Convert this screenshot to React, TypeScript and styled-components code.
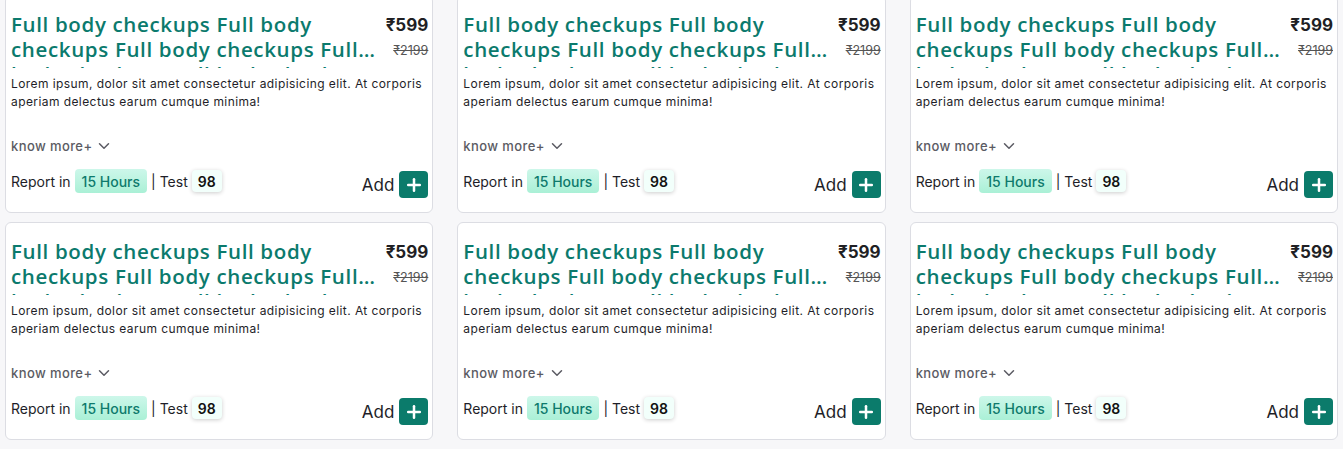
import React from "react";
import styled, { createGlobalStyle } from "styled-components";
import { ChevronDown, Plus } from "lucide-react";

const Global = createGlobalStyle`
  html, body { margin: 0; padding: 0; background: #ffffff; }
  body { font-family: "Inter", "Noto Sans", sans-serif; overflow: hidden; }
`;

const Grid = styled.div`
  display: grid;
  grid-template-columns: repeat(3, minmax(0, 1fr));
  column-gap: 24px;
  row-gap: 9px;
  padding: 0 5px 9px 5px;
  margin-top: -5px;
  background: #f7f7f9;
`;

const Card = styled.div`
  box-sizing: border-box;
  height: 218px;
  background: #fff;
  border: 1px solid #dcdde3;
  border-radius: 6px;
  padding: 16px 4px 14px 5px;
  display: flex;
  flex-direction: column;
`;

const Head = styled.div`
  display: flex;
  justify-content: space-between;
  gap: 3px;
`;

const Title = styled.h3`
  margin: 0;
  flex: 1;
  min-width: 0;
  font-family: "Open Sans", sans-serif;
  font-weight: 600;
  font-size: 20.5px;
  letter-spacing: 0.65px;
  line-height: 25px;
  color: #0b7a6d;
  display: -webkit-box;
  -webkit-line-clamp: 2;
  -webkit-box-orient: vertical;
  overflow: hidden;
  padding-bottom: 6px;
`;

const Prices = styled.div`
  display: flex;
  flex-direction: column;
  align-items: flex-end;
  flex-shrink: 0;
  padding-top: 2px;
`;

const Price = styled.span`
  font-family: "Inter", sans-serif;
  font-weight: 700;
  font-size: 17px;
  line-height: 22px;
  color: #1f1f24;
`;

const OldPrice = styled.span`
  font-family: "Inter", sans-serif;
  font-size: 12.5px;
  line-height: 16px;
  margin-top: 7px;
  color: #555;
  text-decoration: line-through;
`;

const Desc = styled.p`
  margin: 7px 0 0;
  font-family: "Inter", sans-serif;
  font-size: 12px;
  letter-spacing: 0.42px;
  line-height: 18px;
  color: #1e1e28;
  height: 54px;
`;

const KnowMore = styled.div`
  display: flex;
  align-items: center;
  gap: 3px;
  margin-top: 8px;
  font-family: "Inter", sans-serif;
  font-size: 13px;
  letter-spacing: 0.4px;
  font-weight: 500;
  color: #5b5b63;
  line-height: 18px;
`;

const Footer = styled.div`
  display: flex;
  justify-content: space-between;
  align-items: flex-end;
  margin-top: auto;
`;

const Report = styled.div`
  display: flex;
  align-items: center;
  gap: 4px;
  font-family: "Inter", sans-serif;
  font-size: 14px;
  color: #1e1e28;
  margin-bottom: 5px;
`;

const HoursBadge = styled.span`
  display: inline-flex;
  align-items: center;
  height: 24px;
  padding: 0 7px;
  border-radius: 4px;
  background: linear-gradient(180deg, #cdf7ea 0%, #aaf0d6 100%);
  color: #0e7a6c;
  font-weight: 500;
`;

const TestBadge = styled.span`
  display: inline-flex;
  align-items: center;
  height: 22px;
  padding: 0 6px;
  border-radius: 4px;
  background: #f2fffb;
  box-shadow: 0 1px 4px rgba(0, 0, 0, 0.2);
  color: #111;
  font-weight: 600;
`;

const AddWrap = styled.div`
  display: flex;
  align-items: center;
  gap: 5px;
  font-family: "Inter", sans-serif;
  font-size: 17px;
  color: #1e1e28;
`;

const AddButton = styled.button`
  width: 29px;
  height: 27px;
  border: none;
  border-radius: 4px;
  background: #0b7b6b;
  color: #fff;
  display: flex;
  align-items: center;
  justify-content: center;
  padding: 0;
`;

const title =
  "Full body checkups Full body checkups Full body checkups Full body checkups Full body checkups";

const TestCard = () => (
  <Card>
    <Head>
      <Title>{title}</Title>
      <Prices>
        <Price>₹599</Price>
        <OldPrice>₹2199</OldPrice>
      </Prices>
    </Head>
    <Desc>
      Lorem ipsum, dolor sit amet consectetur adipisicing elit. At corporis
      aperiam delectus earum cumque minima!
    </Desc>
    <KnowMore>
      know more+ <ChevronDown size={18} strokeWidth={2} />
    </KnowMore>
    <Footer>
      <Report>
        Report in <HoursBadge>15 Hours</HoursBadge> | Test{" "}
        <TestBadge>98</TestBadge>
      </Report>
      <AddWrap>
        Add
        <AddButton>
          <Plus size={20} strokeWidth={3} />
        </AddButton>
      </AddWrap>
    </Footer>
  </Card>
);

export default function App() {
  return (
    <>
      <Global />
      <Grid>
        {Array.from({ length: 6 }).map((_, i) => (
          <TestCard key={i} />
        ))}
      </Grid>
    </>
  );
}
